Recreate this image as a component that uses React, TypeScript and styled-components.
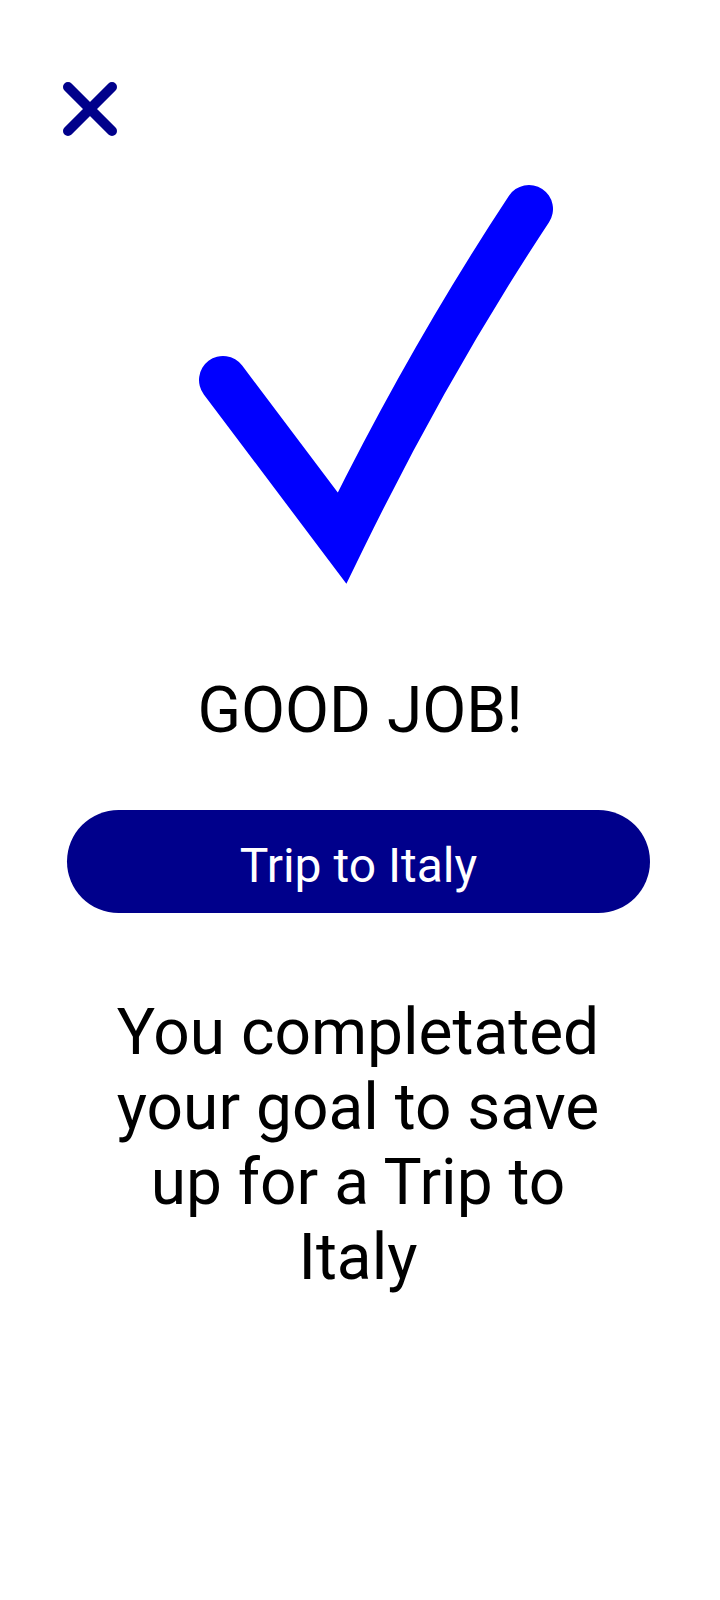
import * as React from "react"
import styled, { createGlobalStyle } from "styled-components"

const GlobalStyles = createGlobalStyle`
  html, body {
    margin: 0;
    padding: 0;
    background: #ffffff;
  }
  body {
    font-family: Roboto, "Liberation Sans", Arial, sans-serif;
    color: #000000;
  }
`

const Screen = styled.main`
  width: 720px;
  min-height: 1600px;
  display: flex;
  flex-direction: column;
  align-items: center;
`

const TopBar = styled.header`
  align-self: stretch;
  display: flex;
  padding: 81px 0 0 62px;
`

const CloseButton = styled.button`
  width: 56px;
  height: 56px;
  padding: 0;
  border: none;
  background: transparent;
  display: flex;
  cursor: pointer;
`

const CheckMark = styled.svg`
  display: block;
  margin-top: 38px;
`

const Title = styled.h1`
  margin: 78px 0 0;
  font-size: 64px;
  font-weight: 400;
  line-height: 75px;
  text-align: center;
`

const GoalButton = styled.button`
  margin: 62px 0 0 -3px;
  width: 583px;
  height: 103px;
  padding: 7px 0 0;
  border: none;
  border-radius: 52px;
  background: #00008b;
  color: #ffffff;
  font-family: inherit;
  font-size: 48px;
  font-weight: 400;
  display: flex;
  align-items: center;
  justify-content: center;
  cursor: pointer;
`

const Message = styled.p`
  margin: 82px 0 0 -4px;
  width: 520px;
  font-size: 64px;
  line-height: 75px;
  text-align: center;
`

const CloseIcon = () => (
  <svg width="56" height="56" viewBox="0 0 56 56" fill="none">
    <path d="M6 6 L50 50 M50 6 L6 50" stroke="#00008b" strokeWidth="10" strokeLinecap="round" />
  </svg>
)

const App: React.FC = () => {
  const goal = "Trip to Italy"
  return (
    <Screen>
      <GlobalStyles />
      <TopBar>
        <CloseButton aria-label="Close">
          <CloseIcon />
        </CloseButton>
      </TopBar>
      <CheckMark width="400" height="420" viewBox="0 0 400 420" fill="none">
        <path
          d="M63 205 L182 363 Q268 187 369 34"
          stroke="#0000ff"
          strokeWidth="48"
          strokeLinecap="round"
          strokeLinejoin="miter"
          strokeMiterlimit="10"
        />
      </CheckMark>
      <Title>GOOD JOB!</Title>
      <GoalButton>{goal}</GoalButton>
      <Message>You completated your goal to save up for a {goal}</Message>
    </Screen>
  )
}

export default App
